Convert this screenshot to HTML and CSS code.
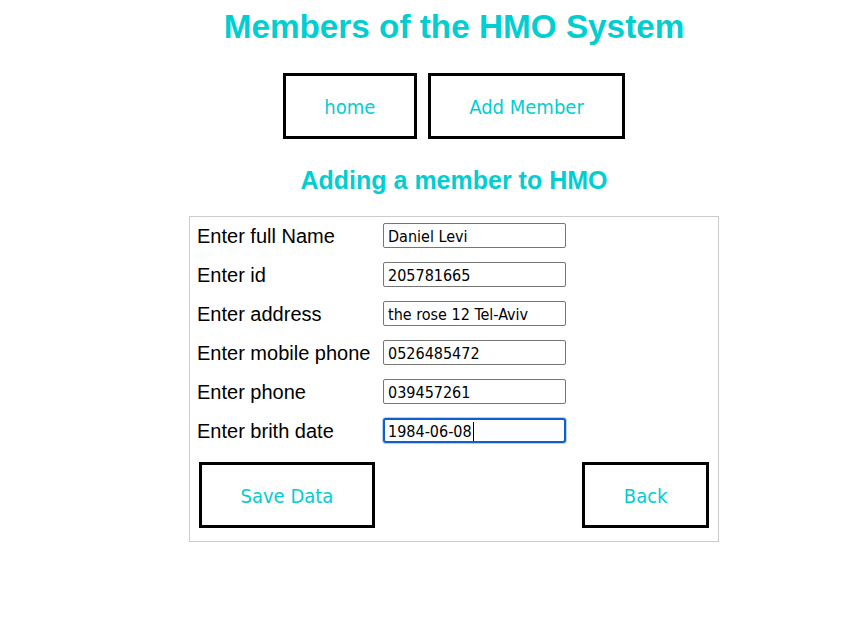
FILE: index.html
```html
<!DOCTYPE html>
<html>
<head>
<meta charset="utf-8">
<title>HMO</title>
<link rel="stylesheet" href="styles.css">
</head>
<body>
<div class="page">
  <h1 class="title">Members of the HMO System</h1>
  <nav class="nav">
    <button class="btn">home</button>
    <button class="btn">Add Member</button>
  </nav>
  <h2 class="subtitle">Adding a member to HMO</h2>
  <form class="card">
    <div class="rows">
      <label class="label">Enter full Name</label>
      <input class="field" type="text" value="Daniel Levi">
      <label class="label">Enter id</label>
      <input class="field" type="text" value="205781665">
      <label class="label">Enter address</label>
      <input class="field" type="text" value="the rose 12 Tel-Aviv">
      <label class="label">Enter mobile phone</label>
      <input class="field" type="text" value="0526485472">
      <label class="label">Enter phone</label>
      <input class="field" type="text" value="039457261">
      <label class="label">Enter brith date</label>
      <div class="field field-focus">1984-06-08<span class="caret"></span></div>
    </div>
    <div class="actions">
      <button class="btn" type="button">Save Data</button>
      <button class="btn" type="button">Back</button>
    </div>
  </form>
</div>
</body>
</html>
```

FILE: styles.css
```css
html, body {
  margin: 0;
  padding: 0;
  background: #ffffff;
}

.page {
  width: 824px;
  margin-left: 42px;
  display: flex;
  flex-direction: column;
  align-items: center;
  font-family: "Liberation Sans", Arial, sans-serif;
}

.title {
  margin: 8px 0 0;
  font-size: 33.3px;
  line-height: 37px;
  font-weight: bold;
  color: #00ced1;
}

.nav {
  display: flex;
  gap: 11px;
  margin-top: 28px;
}

.btn {
  background: #ffffff;
  border: 3px solid #000000;
  padding: 19px 38.5px 17px;
  font-family: "DejaVu Sans Condensed", "DejaVu Sans", sans-serif;
  font-stretch: condensed;
  font-size: 20px;
  line-height: 24px;
  color: #00ced1;
  margin: 0;
  cursor: pointer;
}

.subtitle {
  margin: 27px 0 0;
  font-size: 25px;
  line-height: 28px;
  font-weight: bold;
  color: #00ced1;
}

.card {
  width: 530px;
  box-sizing: border-box;
  margin-top: 22px;
  border: 1px solid #cccccc;
  padding: 6px 0 13px;
}

.rows {
  display: grid;
  grid-template-columns: 186px 183px;
  row-gap: 14px;
  align-items: center;
  padding-left: 7px;
}

.label {
  font-size: 20px;
  line-height: 23px;
  padding-top: 1px;
  color: #000000;
}

.field {
  box-sizing: border-box;
  width: 183px;
  height: 25px;
  margin: 0;
  border: 1px solid #767676;
  border-radius: 2px;
  padding: 2px 4px 0;
  font-family: "DejaVu Sans Condensed", "DejaVu Sans", sans-serif;
  font-stretch: condensed;
  font-size: 16px;
  color: #000000;
  background: #ffffff;
}

.field-focus {
  display: flex;
  align-items: center;
  border: 2px solid #0f5fcf;
  border-radius: 3px;
  padding: 2px 3px 0;
  box-shadow: 0 0 0 1px #b9d0f0;
}

.caret {
  display: inline-block;
  width: 1px;
  height: 19px;
  background: #000000;
  margin-left: 1px;
}

.actions {
  display: flex;
  justify-content: space-between;
  padding: 0 9px;
  margin-top: 19px;
}
```
